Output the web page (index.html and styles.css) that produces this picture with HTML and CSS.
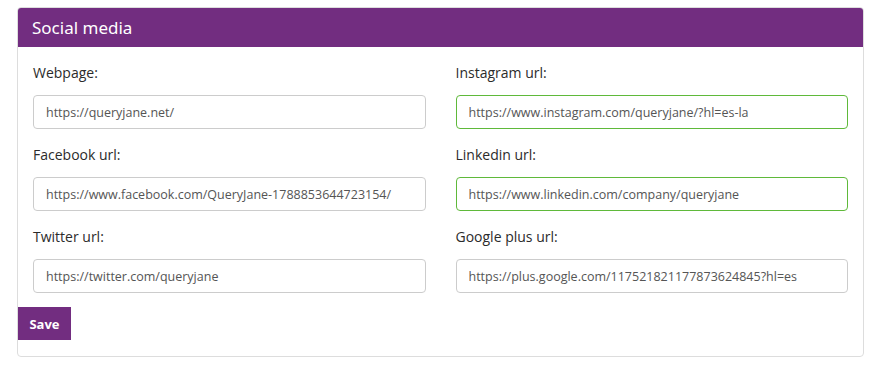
FILE: index.html
```html
<!DOCTYPE html>
<html lang="en">
<head>
	<meta charset="UTF-8">
	<title>Social media</title>
	<link rel="stylesheet" href="styles.css">
</head>
<body>
	<div class="panel">
		<div class="panel-heading">Social media</div>
		<div class="panel-body">
			<div class="field">
				<label>Webpage:</label>
				<input type="text" value="https://queryjane.net/">
			</div>
			<div class="field">
				<label>Instagram url:</label>
				<input type="text" class="valid" value="https://www.instagram.com/queryjane/?hl=es-la">
			</div>
			<div class="field">
				<label>Facebook url:</label>
				<input type="text" value="https://www.facebook.com/QueryJane-1788853644723154/">
			</div>
			<div class="field">
				<label>Linkedin url:</label>
				<input type="text" class="valid" value="https://www.linkedin.com/company/queryjane">
			</div>
			<div class="field">
				<label>Twitter url:</label>
				<input type="text" value="https://twitter.com/queryjane">
			</div>
			<div class="field">
				<label>Google plus url:</label>
				<input type="text" value="https://plus.google.com/117521821177873624845?hl=es">
			</div>
		</div>
		<div class="panel-footer">
			<button class="btnSave">Save</button>
		</div>
	</div>
</body>
</html>
```

FILE: styles.css
```css
*{
	padding: 0;
	margin: 0;
	box-sizing: border-box;
}
body{
	background-color: #fff;
	padding: 7px 0 0 17px;
	font-family: "Open Sans", "Noto Sans", sans-serif;
	color: #333;
}
.panel{
	width: 847px;
	border: 1px solid #ddd;
	border-radius: 4px;
	overflow: hidden;
}
.panel-heading{
	height: 39px;
	background-color: #722d80;
	color: #fff;
	font-family: "Noto Sans", sans-serif;
	font-size: 17px;
	line-height: 39px;
	padding-left: 14px;
}
.panel-body{
	display: grid;
	grid-template-columns: 1fr 1fr;
	column-gap: 30px;
	row-gap: 16px;
	padding: 16px 15px 0 15px;
}
.field label{
	display: block;
	font-size: 14px;
	line-height: 20px;
	margin-bottom: 12px;
	color: #2b2b2b;
}
.field input{
	display: block;
	width: 100%;
	height: 34px;
	border: 1px solid #ccc;
	border-radius: 4px;
	padding: 0 12px;
	font-family: "Open Sans", "Noto Sans", sans-serif;
	font-size: 12.5px;
	color: #555;
	background-color: #fff;
}
.field input.valid{
	border-color: #5fb93a;
}
.panel-footer{
	padding: 14px 0 16px 0;
}
.btnSave{
	display: block;
	width: 53px;
	height: 33px;
	border: none;
	background-color: #722d80;
	color: #fff;
	font-family: "Open Sans", "Noto Sans", sans-serif;
	font-weight: bold;
	font-size: 13px;
}
```
